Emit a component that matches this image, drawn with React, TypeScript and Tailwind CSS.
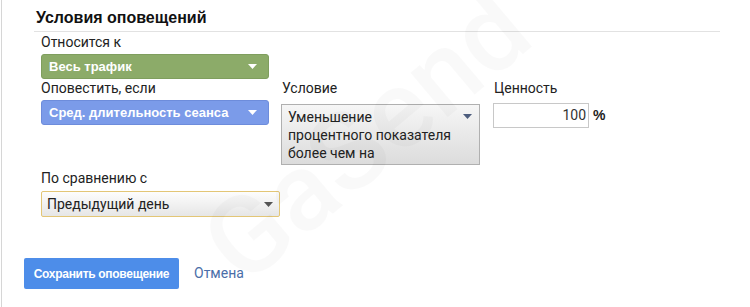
import React from "react";

const Arrow = ({ color }: { color: string }) => (
  <svg width="9" height="5" viewBox="0 0 9 5" className="shrink-0">
    <path d="M0 0 L9 0 L4.5 5 Z" fill={color} />
  </svg>
);

export default function App() {
  return (
    <div className="relative w-[750px] h-[307px] bg-white overflow-hidden font-['Roboto',sans-serif] text-[#222]">
      <div className="ml-[1px] h-full border-l border-[#d6d6d6]">
        <div className="pl-[34px] pt-[8px] h-[31px]">
          <h1 className="font-['Liberation_Sans',Arial,sans-serif] font-bold text-[16px] leading-[20px] text-[#111]">
            Условия оповещений
          </h1>
        </div>
        <div className="ml-[32px] w-[686px] h-px bg-[#e2e2e2]" />
        <div className="pl-[39px]">
          <div className="text-[14px] leading-[18px] mt-[1px]">Относится к</div>
          <div className="mt-[3px] w-[228px] h-[25px] rounded-[3px] bg-[#8cab69] border border-[#7f9e5e] flex items-center justify-between pl-[7px] pr-[11px]">
            <span className="font-['Liberation_Sans',Arial,sans-serif] font-bold text-[13px] text-white">Весь трафик</span>
            <Arrow color="#ffffff" />
          </div>
          <div className="flex items-start">
            <div className="w-[240px]">
              <div className="text-[14px] leading-[18px]">Оповестить, если</div>
              <div className="mt-[3px] w-[228px] h-[25px] rounded-[3px] bg-[#7b9be9] border border-[#6d8cdb] flex items-center justify-between pl-[7px] pr-[11px]">
                <span className="font-['Liberation_Sans',Arial,sans-serif] font-bold text-[13px] text-white">Сред. длительность сеанса</span>
                <Arrow color="#ffffff" />
              </div>
            </div>
            <div className="w-[212px]">
              <div className="text-[14px] leading-[18px] ml-[1px]">Условие</div>
              <div className="mt-[7px] w-[199px] h-[61px] border border-[#b0b0b0] bg-gradient-to-b from-[#f6f6f6] to-[#dcdcdc] flex items-start justify-between pl-[6px] pr-[7px] pt-[3px]">
                <span className="text-[14px] leading-[18px] text-[#222]">
                  Уменьшение
                  <br />
                  процентного показателя
                  <br />
                  более чем на
                </span>
                <span className="mt-[6px]">
                  <Arrow color="#4d5d7d" />
                </span>
              </div>
            </div>
            <div>
              <div className="text-[14px] leading-[18px] ml-[1px]">Ценность</div>
              <div className="mt-[6px] flex items-center">
                <div className="w-[96px] h-[25px] border border-[#c8c8c8] bg-white flex items-center justify-end pr-[2px] text-[14px] text-[#333]">
                  100
                </div>
                <span className="ml-[4px] font-['Liberation_Sans',Arial,sans-serif] font-bold text-[14px] text-[#222]">%</span>
              </div>
            </div>
          </div>
          <div className="text-[14px] leading-[18px] mt-[4px]">По сравнению с</div>
          <div className="mt-[4px] w-[239px] h-[26px] rounded-[2px] border border-[#e3c676] bg-gradient-to-b from-[#fdfdfd] to-[#e6e6e6] flex items-center justify-between pl-[5px] pr-[6px]">
            <span className="text-[14px] text-[#222]">Предыдущий день</span>
            <Arrow color="#555555" />
          </div>
        </div>
        <div className="pl-[22px] mt-[41px] flex items-center">
          <button className="w-[155px] h-[31px] rounded-[2px] bg-[#4d8de9] font-['Liberation_Sans',Arial,sans-serif] font-bold text-[12px] text-white tracking-[-0.3px]">
            Сохранить оповещение
          </button>
          <span className="ml-[15px] text-[14px] text-[#4a6ea8]">Отмена</span>
        </div>
      </div>
      <div className="pointer-events-none absolute left-[220px] top-[205px] origin-left -rotate-[40deg] font-['Roboto',sans-serif] font-medium text-[110px] leading-none text-black/[0.025] select-none">
        GaSend
      </div>
    </div>
  );
}
